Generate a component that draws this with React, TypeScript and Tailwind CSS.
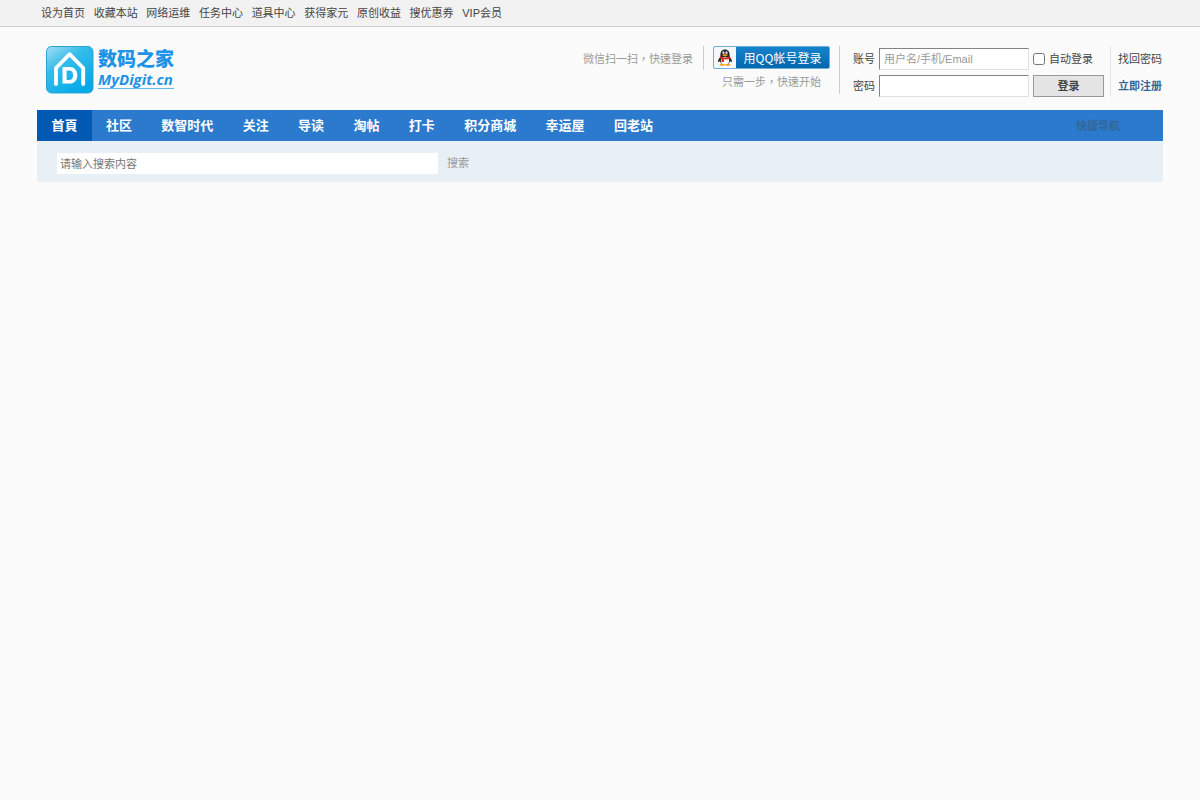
import React from 'react';

const topLinks = ['设为首页', '收藏本站', '网络运维', '任务中心', '道具中心', '获得家元', '原创收益', '搜优惠券', 'VIP会员'];

const navLinks = ['社区', '数智时代', '关注', '导读', '淘帖', '打卡', '积分商城', '幸运屋', '回老站'];

const fieldClass =
  'h-[22px] w-[150px] border border-t-[#848484] border-l-[#848484] border-r-[#e0e0e0] border-b-[#e0e0e0] bg-white px-1 text-[11px] text-[#444] placeholder:text-[#999] outline-none';

const LogoMark: React.FC = () => (
  <svg viewBox="0 0 48 48" className="h-12 w-12" aria-hidden="true">
    <defs>
      <linearGradient id="tile" x1="0" y1="0" x2="0.7" y2="1">
        <stop offset="0" stopColor="#a5def6" />
        <stop offset="0.4" stopColor="#35bdea" />
        <stop offset="1" stopColor="#02a9e8" />
      </linearGradient>
    </defs>
    <rect x="0.5" y="0.5" width="46.5" height="46.5" rx="5" fill="url(#tile)" stroke="#2aa5cf" />
    <path d="M10 38V22L23.6 8.2L37.2 22V38" fill="none" stroke="#fff" strokeWidth="3.8" strokeLinecap="round" strokeLinejoin="round" />
    <path
      d="M16.5 21H23.5C28.5 21 31.3 24.2 31.3 29.2S28.5 37.5 23.5 37.5H16.5ZM20.6 24.6V33.9H23.2C26 33.9 27 32.2 27 29.2S26 24.6 23.2 24.6Z"
      fill="#fff"
      fillRule="evenodd"
    />
  </svg>
);

const Penguin: React.FC = () => (
  <svg viewBox="0 0 16 17" className="h-[17px] w-4" aria-hidden="true">
    <path d="M3.6 8C1.8 9.6 0.7 11.6 1.1 13C1.7 13.2 2.5 12.4 3 11.7M12.4 8C14.2 9.6 15.3 11.6 14.9 13C14.3 13.2 13.5 12.4 13 11.7" fill="#222" />
    <ellipse cx="8" cy="10.6" rx="5.3" ry="5.4" fill="#222" />
    <path d="M8 0.5C5 0.5 3.4 2.8 3.4 5.8V8H12.6V5.8C12.6 2.8 11 0.5 8 0.5Z" fill="#222" />
    <ellipse cx="8" cy="12" rx="4.2" ry="4.2" fill="#fff" />
    <ellipse cx="6.5" cy="3.7" rx="1.1" ry="1.5" fill="#fff" />
    <ellipse cx="9.5" cy="3.7" rx="1.1" ry="1.5" fill="#fff" />
    <circle cx="6.8" cy="3.9" r="0.5" fill="#222" />
    <circle cx="9.2" cy="3.9" r="0.5" fill="#222" />
    <ellipse cx="8" cy="6.1" rx="2.8" ry="0.9" fill="#f7a51c" />
    <path d="M3 7.2C6 8.8 10 8.8 13 7.2L13.5 9C10.5 10.6 8.5 10.6 7 10.3V13H4.5V9.8L2.6 8.8Z" fill="#e02a1e" />
    <ellipse cx="5.2" cy="15.8" rx="2.8" ry="1.1" fill="#f7a51c" />
    <ellipse cx="10.8" cy="15.8" rx="2.8" ry="1.1" fill="#f7a51c" />
  </svg>
);

const TopBar: React.FC = () => (
  <div className="border-b border-[#cdcdcd] bg-[#f2f2f2] px-[41px]">
    <nav className="flex h-[26px] w-[461px] items-center justify-between pt-px whitespace-nowrap">
      {topLinks.map((link) => (
        <a key={link} href="#">{link}</a>
      ))}
    </nav>
  </div>
);

const QuickLogin: React.FC = () => (
  <div className="flex items-start font-['Liberation_Sans','Noto_Sans_CJK_TC',sans-serif] text-[#999]">
    <p className="mr-[9px] flex h-6 items-center border-r border-[#ccc] pt-[2px] pr-[10px]">微信扫一扫，快速登录</p>
    <div className="flex h-12 flex-col items-center border-r border-[#ccc] pr-[9px]">
      <button
        type="button"
        className="flex h-[23px] w-[117px] shrink-0 items-stretch overflow-hidden rounded-xs border border-[#6fb0da] bg-linear-to-b from-[#1583cd] to-[#0467ae] font-['Noto_Sans_CJK_SC',sans-serif] text-white"
      >
        <span className="flex w-[22px] items-center justify-center bg-[#f2f8fc]">
          <Penguin />
        </span>
        <span className="flex flex-1 items-center justify-center text-xs">用QQ帐号登录</span>
      </button>
      <p className="mt-[5px] leading-4">只需一步，快速开始</p>
    </div>
  </div>
);

const LoginForm: React.FC = () => (
  <form className="ml-[13px] flex" onSubmit={(e) => e.preventDefault()}>
    <div className="mr-[6px] grid grid-cols-[auto_auto_auto] items-center gap-x-1 gap-y-[5px] pt-[2px]">
      <label htmlFor="account">账号</label>
      <input id="account" type="text" placeholder="用户名/手机/Email" className={fieldClass} />
      <label className="flex items-center gap-1">
        <input type="checkbox" className="h-3 w-3" />
        自动登录
      </label>
      <label htmlFor="password">密码</label>
      <input id="password" type="password" className={fieldClass} />
      <button type="submit" className="h-[22px] w-[71px] border border-[#999] bg-[#e5e5e5] font-bold">
        登录
      </button>
    </div>
    <div className="grid gap-y-[5px] border-l border-[#e5e5e5] pt-[2px] pl-[7px]">
      <a href="#" className="flex h-[22px] items-center">找回密码</a>
      <a href="#" className="flex h-[22px] items-center font-bold text-[#336699]">立即注册</a>
    </div>
  </form>
);

const Header: React.FC = () => (
  <header className="flex items-start justify-between pt-[19px] pr-px pb-[13px] pl-[9px]">
    <a href="#" className="flex gap-1">
      <LogoMark />
      <span className="flex flex-col text-[#1c93e6]">
        <span className="font-['Noto_Sans_CJK_SC',sans-serif] text-[19px] leading-6 font-black">数码之家</span>
        <span className="border-b border-[#5fb8ee] font-['Open_Sans',sans-serif] text-[15px] leading-[18px] font-bold italic">MyDigit.cn</span>
      </span>
    </a>
    <div className="flex items-start whitespace-nowrap">
      <QuickLogin />
      <LoginForm />
    </div>
  </header>
);

export default function App() {
  return (
    <div className="min-h-screen bg-[#fbfbfb] font-['Liberation_Sans','Noto_Sans_CJK_SC',sans-serif] text-[11px] text-[#444]">
      <TopBar />
      <div className="px-[37px]">
        <Header />
        <nav className="flex h-[31px] items-stretch justify-between bg-[#2b7acd] text-[13px] font-bold whitespace-nowrap text-white">
          <div className="flex">
            <a href="#" className="flex w-[55px] items-center justify-center bg-[#005ab4]">首頁</a>
            <div className="flex w-[575px] items-center justify-between px-[14px]">
              {navLinks.map((link) => (
                <a key={link} href="#">{link}</a>
              ))}
            </div>
          </div>
          <a href="#" className="flex items-center pt-px pr-[43px] text-[11px] text-[#336699]">快捷导航</a>
        </nav>
        <form className="flex h-[41px] items-center gap-[9px] bg-[#e8eff5] pt-1 pl-5" onSubmit={(e) => e.preventDefault()}>
          <input
            type="text"
            aria-label="搜索内容"
            placeholder="请输入搜索内容"
            className="h-[21px] w-[381px] bg-white px-[3px] outline-none placeholder:text-[#757575]"
          />
          <button type="submit" className="text-[#999]">搜索</button>
        </form>
      </div>
    </div>
  );
}
